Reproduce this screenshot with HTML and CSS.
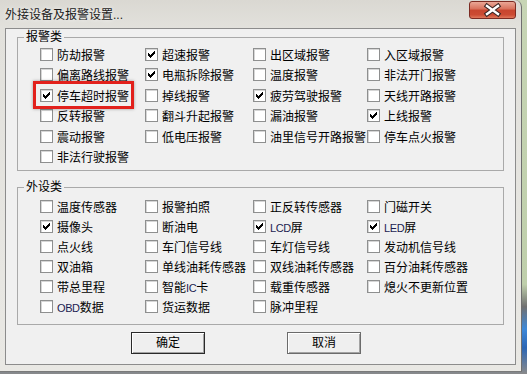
FILE: index.html
```html
<!DOCTYPE html>
<html lang="zh-CN">
<head>
    <meta charset="UTF-8">
    <meta name="viewport" content="width=device-width, initial-scale=1.0">
    <link rel="stylesheet" href="styles.css">
</head>
<body>
    <svg class="defs" width="0" height="0">
        <symbol id="tick" viewBox="0 0 7 7">
            <path d="M6 0h1v1h-1z M5 1h2v1h-2z M0 2h1v1h-1z M4 2h3v1h-3z M0 3h2v1h-2z M3 3h3v1h-3z M0 4h5v1h-5z M1 5h3v1h-3z M2 6h1v1h-1z" fill="#000"/>
        </symbol>
    </svg>
    <div class="window">
        <div class="titlebar">
            <span class="title">外接设备及报警设置...</span>
            <span class="close">
                <svg width="47" height="18" viewBox="0 0 47 18">
                    <path d="M18 5 L29 13 M29 5 L18 13" stroke="#3b2624" stroke-width="4.6" stroke-linecap="square"/>
                    <path d="M18 5 L29 13 M29 5 L18 13" stroke="#fff" stroke-width="2.4" stroke-linecap="square"/>
                </svg>
            </span>
        </div>
        <div class="client">
            <fieldset class="group alarms">
                <legend>报警类</legend>
                <div class="grid">
                    <label class="item"><span class="box"></span>防劫报警</label>
                    <label class="item"><span class="box"><svg><use href="#tick"/></svg></span>超速报警</label>
                    <label class="item"><span class="box"></span>出区域报警</label>
                    <label class="item"><span class="box"></span>入区域报警</label>

                    <label class="item"><span class="box"></span>偏离路线报警</label>
                    <label class="item"><span class="box"><svg><use href="#tick"/></svg></span>电瓶拆除报警</label>
                    <label class="item"><span class="box"></span>温度报警</label>
                    <label class="item"><span class="box"></span>非法开门报警</label>

                    <label class="item flag"><span class="box"><svg><use href="#tick"/></svg></span>停车超时报警</label>
                    <label class="item"><span class="box"></span>掉线报警</label>
                    <label class="item"><span class="box"><svg><use href="#tick"/></svg></span>疲劳驾驶报警</label>
                    <label class="item"><span class="box"></span>天线开路报警</label>

                    <label class="item"><span class="box"></span>反转报警</label>
                    <label class="item"><span class="box"></span>翻斗升起报警</label>
                    <label class="item"><span class="box"></span>漏油报警</label>
                    <label class="item"><span class="box"><svg><use href="#tick"/></svg></span>上线报警</label>

                    <label class="item"><span class="box"></span>震动报警</label>
                    <label class="item"><span class="box"></span>低电压报警</label>
                    <label class="item"><span class="box"></span>油里信号开路报警</label>
                    <label class="item"><span class="box"></span>停车点火报警</label>

                    <label class="item"><span class="box"></span>非法行驶报警</label>
                </div>
            </fieldset>

            <fieldset class="group devices">
                <legend>外设类</legend>
                <div class="grid">
                    <label class="item"><span class="box"></span>温度传感器</label>
                    <label class="item"><span class="box"></span>报警拍照</label>
                    <label class="item"><span class="box"></span>正反转传感器</label>
                    <label class="item"><span class="box"></span>门磁开关</label>

                    <label class="item"><span class="box"><svg><use href="#tick"/></svg></span>摄像头</label>
                    <label class="item"><span class="box"></span>断油电</label>
                    <label class="item"><span class="box"><svg><use href="#tick"/></svg></span><span><span class="latin">LCD</span>屏</span></label>
                    <label class="item"><span class="box"><svg><use href="#tick"/></svg></span><span><span class="latin">LED</span>屏</span></label>

                    <label class="item"><span class="box"></span>点火线</label>
                    <label class="item"><span class="box"></span>车门信号线</label>
                    <label class="item"><span class="box"></span>车灯信号线</label>
                    <label class="item"><span class="box"></span>发动机信号线</label>

                    <label class="item"><span class="box"></span>双油箱</label>
                    <label class="item"><span class="box"></span>单线油耗传感器</label>
                    <label class="item"><span class="box"></span>双线油耗传感器</label>
                    <label class="item"><span class="box"></span>百分油耗传感器</label>

                    <label class="item"><span class="box"></span>带总里程</label>
                    <label class="item"><span class="box"></span><span>智能<span class="latin">IC</span>卡</span></label>
                    <label class="item"><span class="box"></span>载重传感器</label>
                    <label class="item"><span class="box"></span>熄火不更新位置</label>

                    <label class="item"><span class="box"></span><span><span class="latin">OBD</span>数据</span></label>
                    <label class="item"><span class="box"></span>货运数据</label>
                    <label class="item"><span class="box"></span>脉冲里程</label>
                </div>
            </fieldset>

            <div class="buttons">
                <button class="btn default">确定</button>
                <button class="btn">取消</button>
            </div>
        </div>
    </div>
</body>
</html>
```

FILE: styles.css
```css
body {
    margin: 0;
    width: 527px;
    height: 374px;
    overflow: hidden;
    font-family: "Liberation Sans", "Noto Sans CJK SC", sans-serif;
    font-size: 12px;
    color: #000;
    background: linear-gradient(to bottom, #c7d5b5 0, #bfcfab 76%, #707070 82%, #3d88d8 88%, #2c66b4 93%, #8a8a8a 100%);
}
.defs {
    position: absolute;
}
.window {
    width: 522px;
    height: 372px;
    box-sizing: border-box;
    padding: 0 5px 6px 5px;
    display: flex;
    flex-direction: column;
    background: linear-gradient(to bottom, #dad8d2 0, #e2e1dc 28px, #e9e8e4 100%);
    border-right: 1px solid #6f6f6f;
    border-bottom: 1px solid #7a7a7a;
    border-radius: 0 7px 0 0;
}
.titlebar {
    height: 28px;
    display: flex;
    justify-content: space-between;
    align-items: flex-start;
}
.title {
    margin-top: 7px;
    line-height: 16px;
    color: #1b1b1b;
    text-shadow: 0 0 4px rgba(255, 255, 255, 0.9);
}
.close {
    width: 47px;
    height: 18px;
    margin-top: 1px;
    box-sizing: border-box;
    border: 1px solid #7c2b22;
    border-radius: 3px;
    background: linear-gradient(to bottom, #eaa796 0, #d9735e 42%, #c8462f 52%, #cc4b33 80%, #e0785c 100%);
    display: flex;
    align-items: center;
    justify-content: center;
    overflow: hidden;
}
.close svg {
    flex: none;
}
.client {
    flex: 1;
    border: 1px solid #8c8c8c;
    background: #f0f0f0;
    display: flex;
    flex-direction: column;
}
.group {
    margin: 0 11px;
    padding: 0;
    border: 1px solid #a9a9a9;
    min-inline-size: 0;
}
.group legend {
    margin-left: 6px;
    padding: 0 2px;
    line-height: 14px;
}
.alarms {
    margin-top: 1px;
    padding-bottom: 3px;
}
.devices {
    margin-top: 9px;
    padding-top: 2px;
    padding-bottom: 8px;
}
.grid {
    display: grid;
    grid-template-columns: 105px 108px 114px auto;
    padding-left: 22px;
}
.alarms .grid {
    grid-auto-rows: 20.5px;
}
.devices .grid {
    grid-auto-rows: 20px;
}
.item {
    display: flex;
    align-items: center;
    gap: 4px;
    white-space: nowrap;
}
.box {
    width: 13px;
    height: 13px;
    box-sizing: border-box;
    flex: none;
    border: 1px solid #8e8f8f;
    background: #fff;
    box-shadow: inset 1px 1px 0 #d6d6d6;
    display: flex;
    align-items: center;
    justify-content: center;
}
.box svg {
    width: 7px;
    height: 7px;
}
.latin {
    font-size: 11px;
    letter-spacing: -0.4px;
    color: #1c1c50;
}
.flag {
    position: relative;
}
.flag::after {
    content: "";
    position: absolute;
    left: -7px;
    top: -4px;
    width: 101px;
    height: 28px;
    box-sizing: border-box;
    border: 3px solid #e2211c;
    box-shadow: 0 0 3px rgba(0, 0, 0, 0.35);
}
.buttons {
    display: flex;
    gap: 82px;
    padding-left: 125px;
    margin-top: 7px;
}
.btn {
    width: 74px;
    height: 22px;
    padding: 0;
    font: inherit;
    line-height: 18px;
    border: 1px solid #6b6b6b;
    background: #efefef;
    box-shadow: inset 1px 1px 0 #fff, inset -1px -1px 0 #a3a3a3;
}
.btn.default {
    border-color: #2a2a2a;
}
```
